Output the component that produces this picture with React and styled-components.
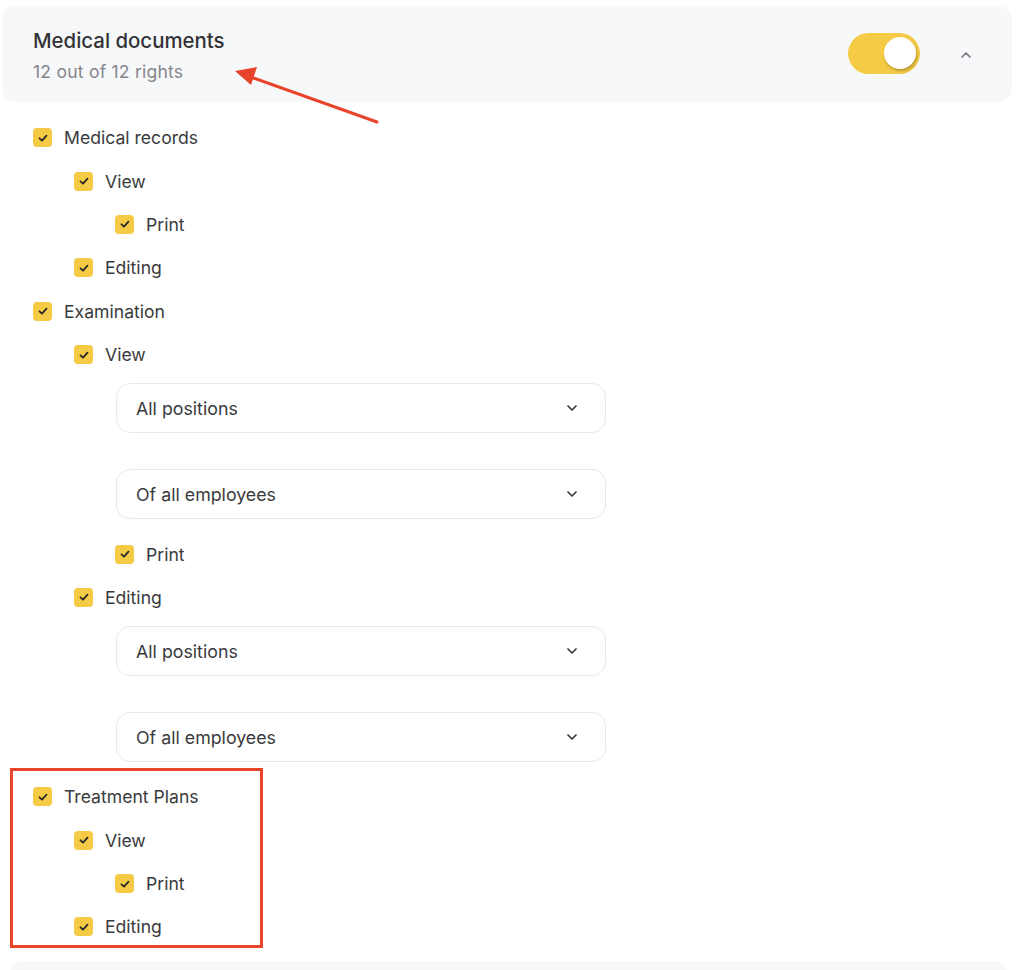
import styled, { createGlobalStyle } from "styled-components";

const GlobalStyle = createGlobalStyle`
    body {
        margin: 0;
        background: #ffffff;
        font-family: Inter, "Noto Sans", sans-serif;
        color: #3a3a3c;
    }
`

const tree = [
    {
        label: "Medical records",
        children: [
            { label: "View", children: [{ label: "Print" }] },
            { label: "Editing" },
        ],
    },
    {
        label: "Examination",
        children: [
            { label: "View", selects: true, children: [{ label: "Print" }] },
            { label: "Editing", selects: true },
        ],
    },
]

const treatment = {
    label: "Treatment Plans",
    children: [
        { label: "View", children: [{ label: "Print" }] },
        { label: "Editing" },
    ],
}

const Check = () => (
    <SBox>
        <svg width="12" height="12" viewBox="0 0 12 12">
            <path d="M2.5 6.3 L5 8.6 L9.5 3.6" fill="none" stroke="#2b2b2b" strokeWidth="1.8" strokeLinecap="round" strokeLinejoin="round" />
        </svg>
    </SBox>
)

const Select = ({ text }) => (
    <SSelect>
        <span>{text}</span>
        <svg width="14" height="14" viewBox="0 0 14 14">
            <path d="M3 5 L7 9 L11 5" fill="none" stroke="#3a3a3c" strokeWidth="1.7" strokeLinecap="round" strokeLinejoin="round" />
        </svg>
    </SSelect>
)

const Node = ({ item, level }) => (
    <>
        <SRow level={level}>
            <Check />
            <SLabel>{item.label}</SLabel>
        </SRow>
        {item.selects && (
            <SSelects level={level + 1}>
                <Select text="All positions" />
                <Select text="Of all employees" />
            </SSelects>
        )}
        {item.children && item.children.map((c, i) => (
            <Node key={i} item={c} level={level + 1} />
        ))}
    </>
)

export default function App() {
    return (
        <SPage>
            <GlobalStyle />
            <SPanel>
                <div>
                    <STitle>Medical documents</STitle>
                    <SSub>12 out of 12 rights</SSub>
                </div>
                <SActions>
                    <SToggle><SKnob /></SToggle>
                    <SChevron width="16" height="16" viewBox="0 0 16 16">
                        <path d="M4 10 L8 6 L12 10" fill="none" stroke="#7a7a80" strokeWidth="1.7" strokeLinecap="round" strokeLinejoin="round" />
                    </SChevron>
                </SActions>
                <SArrow width="150" height="66" viewBox="0 0 150 66">
                    <line x1="144" y1="62" x2="12" y2="15" stroke="#e8442c" strokeWidth="3" strokeLinecap="round" />
                    <path d="M2 11 L24 7 L18 25 Z" fill="#e8442c" />
                </SArrow>
            </SPanel>
            <SList>
                {tree.map((item, i) => <Node key={i} item={item} level={0} />)}
                <SMarked>
                    <Node item={treatment} level={0} />
                </SMarked>
            </SList>
            <SNext />
        </SPage>
    )
}

const SPage = styled.div`
    width: 1024px;
    height: 970px;
    overflow: hidden;
    padding-top: 6px;
    box-sizing: border-box;
`

const SPanel = styled.div`
    position: relative;
    margin-left: 2px;
    width: 1010px;
    height: 96px;
    box-sizing: border-box;
    background: #f7f8fa;
    border-radius: 14px;
    display: flex;
    align-items: center;
    justify-content: space-between;
    padding: 0 38px 0 31px;
`

const STitle = styled.div`
    font-size: 20.4px;
    font-weight: 500;
    color: #333336;
    margin-top: 2px;
`

const SSub = styled.div`
    font-size: 17.6px;
    letter-spacing: 0.2px;
    color: #86868c;
    margin-top: 8px;
`

const SActions = styled.div`
    display: flex;
    align-items: center;
    gap: 38px;
    margin-top: -2px;
`

const SChevron = styled.svg`
    margin-top: 4px;
`

const SToggle = styled.div`
    width: 72px;
    height: 41px;
    border-radius: 21px;
    background: #f5ca45;
    display: flex;
    align-items: center;
    justify-content: flex-end;
    padding: 0 4px;
    box-sizing: border-box;
`

const SKnob = styled.div`
    width: 32px;
    height: 32px;
    border-radius: 50%;
    background: #ffffff;
    box-shadow: 1px 2px 3px rgba(0, 0, 0, 0.25);
`

const SArrow = styled.svg`
    position: absolute;
    left: 231px;
    top: 54px;
    overflow: visible;
`

const SList = styled.div`
    padding: 14px 0 0 33px;
`

const SRow = styled.div`
    display: flex;
    align-items: center;
    height: 43.4px;
    padding-left: ${p => p.level * 41}px;
    gap: 12px;
`

const SBox = styled.span`
    width: 19px;
    height: 19px;
    border-radius: 4px;
    background: #f5ca45;
    display: flex;
    align-items: center;
    justify-content: center;
    flex-shrink: 0;
`

const SLabel = styled.span`
    font-size: 17.6px;
    color: #3a3a3c;
`

const SSelects = styled.div`
    display: flex;
    flex-direction: column;
    gap: 36px;
    padding: 7px 0 13px ${p => p.level * 41 + 1}px;
`

const SSelect = styled.div`
    width: 490px;
    height: 50px;
    box-sizing: border-box;
    border: 1.5px solid #e6e8f2;
    border-radius: 14px;
    display: flex;
    align-items: center;
    justify-content: space-between;
    padding: 0 26px 0 19px;
    font-size: 17.8px;
    color: #3a3a3c;
`

const SMarked = styled.div`
    position: relative;
    &::after {
        content: "";
        position: absolute;
        left: -23px;
        top: -7px;
        width: 253px;
        height: 180px;
        border: 3px solid #e8442c;
        box-sizing: border-box;
        pointer-events: none;
    }
`

const SNext = styled.div`
    margin: 12px 0 0 10px;
    width: 998px;
    height: 40px;
    background: #f7f8fa;
    border-radius: 14px;
`
